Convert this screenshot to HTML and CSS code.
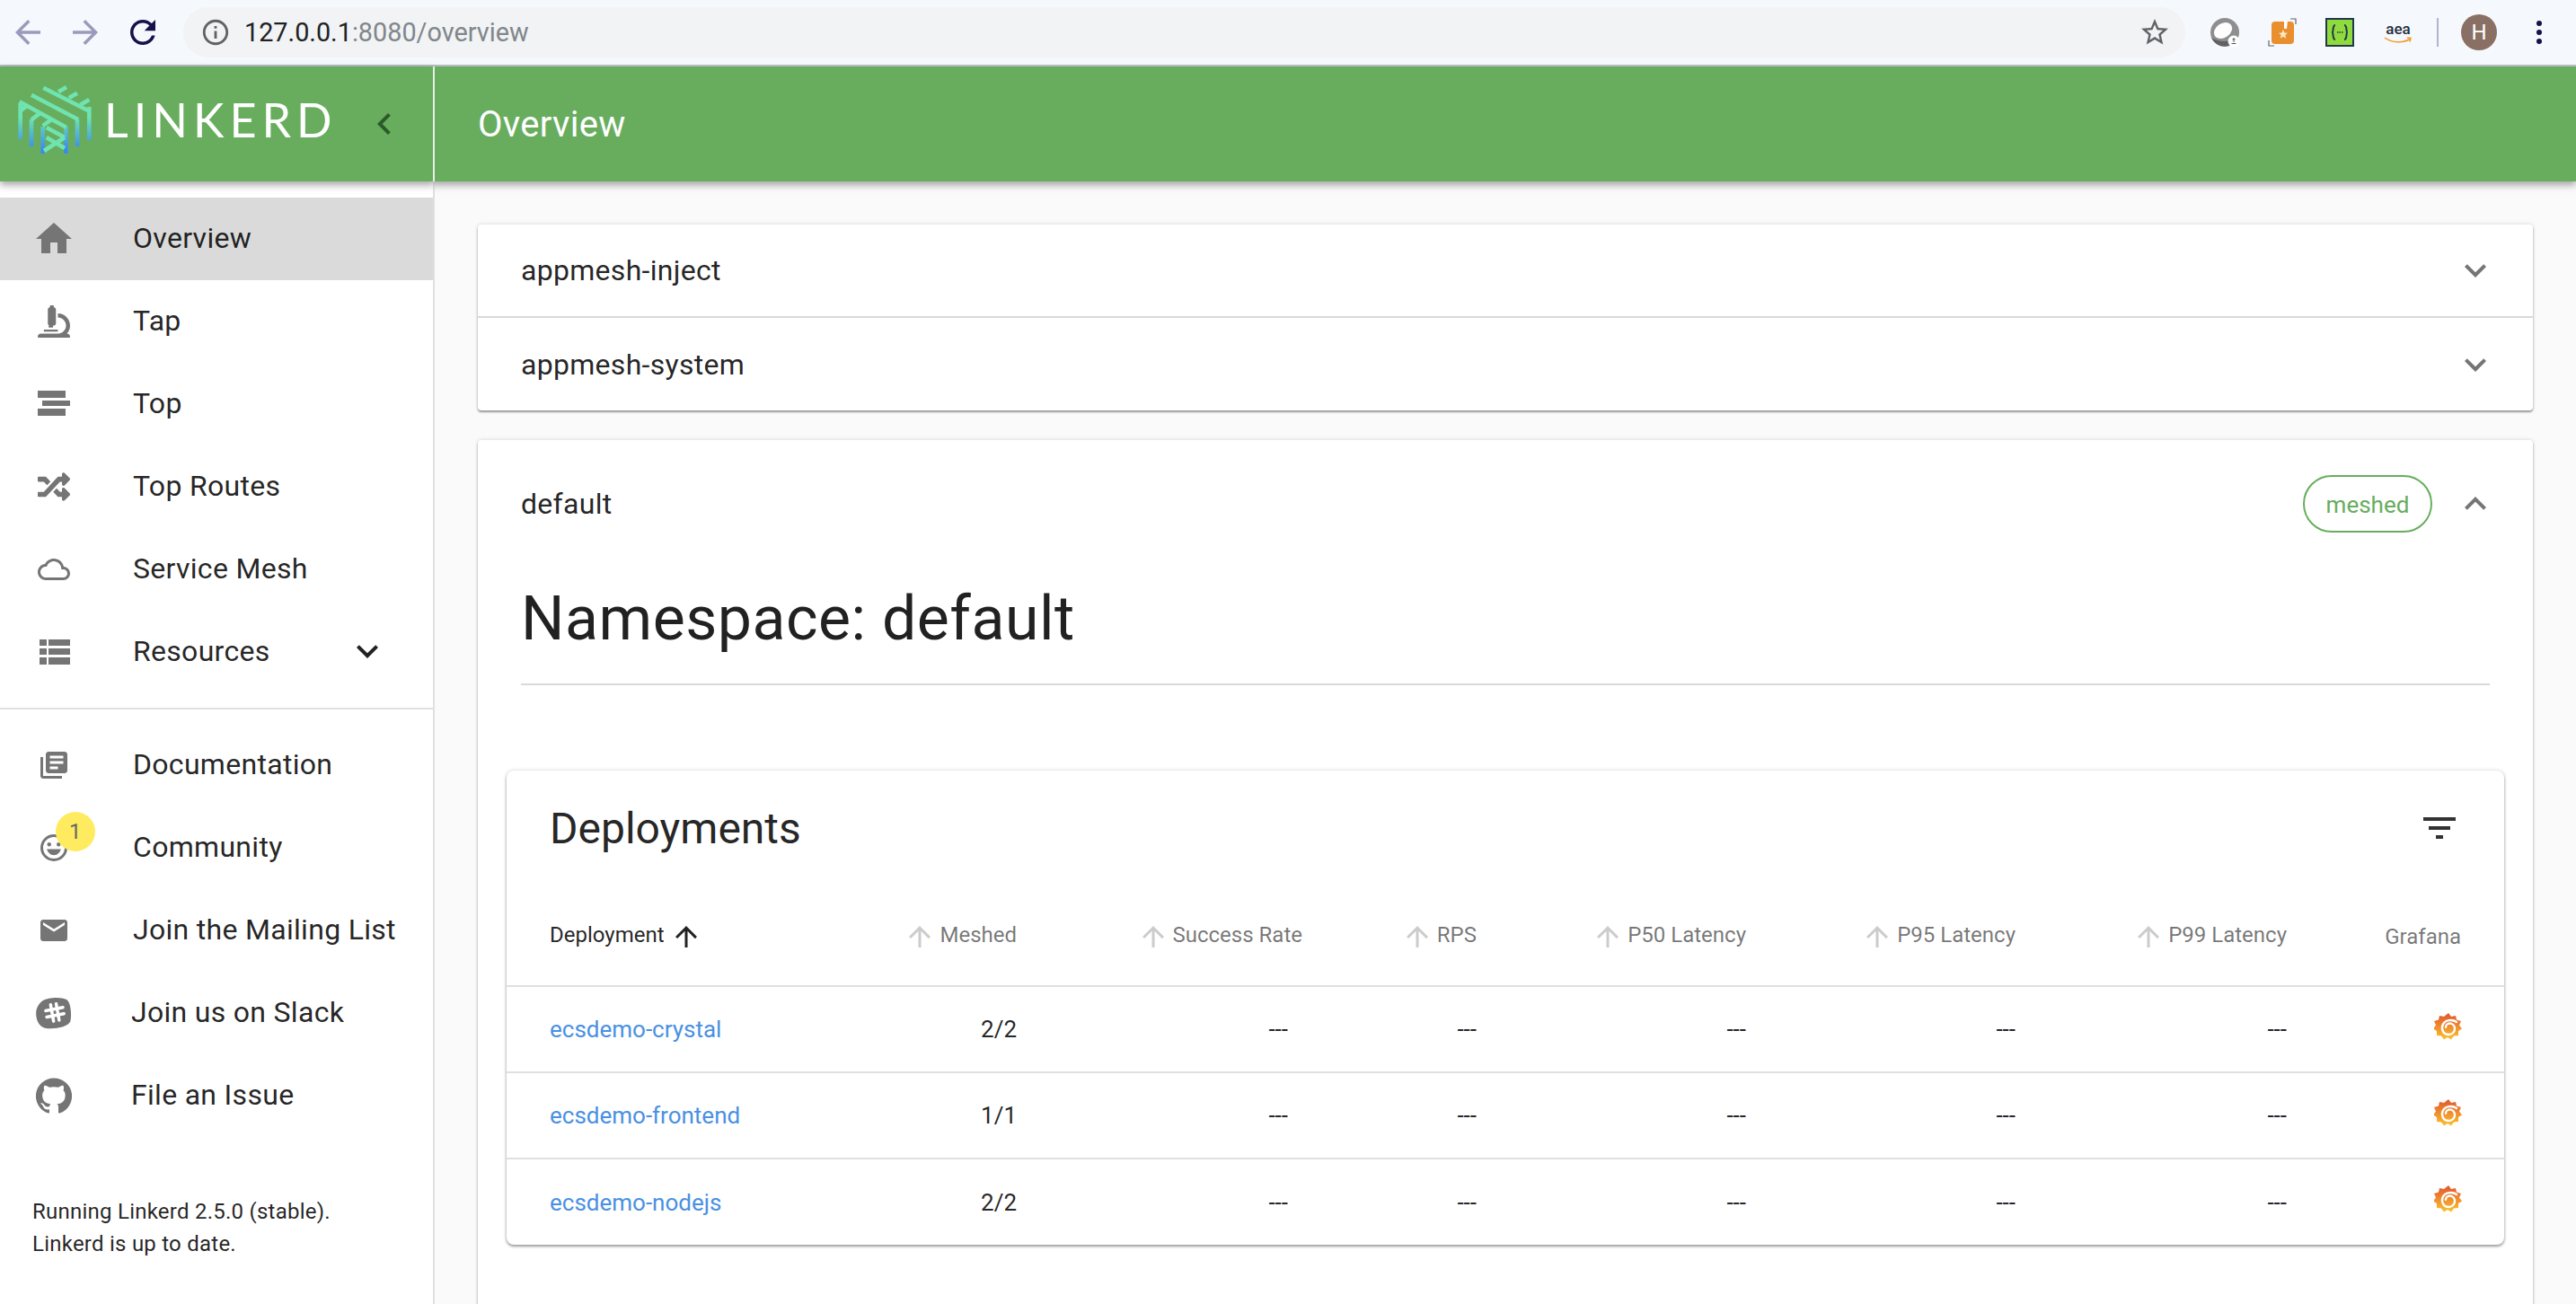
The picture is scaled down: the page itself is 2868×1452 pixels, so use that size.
FILE: index.html
```html
<!DOCTYPE html>
<html lang="en">
<head>
<title>Linkerd</title>
<link rel="stylesheet" href="styles.css">
</head>
<body>
<svg class="sprite">
	<defs>
		<linearGradient id="logograd" gradientUnits="userSpaceOnUse" x1="0" y1="36" x2="0" y2="72">
			<stop offset="0" stop-color="#6ce4b0"/>
			<stop offset="1" stop-color="#3b88f5"/>
		</linearGradient>
		<linearGradient id="sungrad" gradientUnits="userSpaceOnUse" x1="0" y1="2" x2="0" y2="30">
			<stop offset="0" stop-color="#e2592f"/>
			<stop offset="1" stop-color="#fbc02d"/>
		</linearGradient>
	</defs>
	<symbol id="more" viewBox="0 0 24 24"><path d="M16.59 8.59L12 13.17 7.41 8.59 6 10l6 6 6-6z"/></symbol>
	<symbol id="less" viewBox="0 0 24 24"><path d="M12 8l-6 6 1.41 1.41L12 10.83l4.59 4.58L18 14z"/></symbol>
	<symbol id="up" viewBox="0 0 24 24"><path d="M4 12l1.41 1.41L11 7.83V20h2V7.83l5.58 5.59L20 12l-8-8-8 8z"/></symbol>
	<symbol id="sun" viewBox="0 0 32 32">
		<path d="M16 1l3 4 5-1 1 4.500 5 1.500-2 4.500 3 4-4 2.500v5l-5 .5-3 4-4-2.500-4 2.500-3-4-5-.5v-5l-4-2.500 3-4-2-4.500 5-1.500 1-4.500 5 1z" fill="url(#sungrad)"/>
		<path d="M25 11C20.500 7.500 12 8.500 9.500 14.500 7.500 20 11 25 16 25c4.500 0 7.500-3.500 7-7.500-.5-3-3-5-5.500-5-2.500 0-4.500 2-4.500 4.300" fill="none" stroke="#fff" stroke-width="2.400" stroke-linecap="round"/>
	</symbol>
</svg>

<div class="chrome">
	<svg class="navicon faded" viewBox="0 0 24 24"><path d="M20 11H7.830l5.590-5.590L12 4l-8 8 8 8 1.410-1.410L7.830 13H20v-2z"/></svg>
	<svg class="navicon faded" viewBox="0 0 24 24"><path d="M12 4l-1.410 1.410L16.170 11H4v2h12.170l-5.580 5.590L12 20l8-8z"/></svg>
	<svg class="navicon dark" viewBox="0 0 24 24"><path d="M17.650 6.350C16.200 4.900 14.210 4 12 4c-4.420 0-7.990 3.580-7.990 8s3.570 8 7.990 8c3.730 0 6.840-2.550 7.730-6h-2.080c-.82 2.330-3.040 4-5.650 4-3.310 0-6-2.690-6-6s2.690-6 6-6c1.660 0 3.140.69 4.220 1.780L13 11h7V4l-2.350 2.350z"/></svg>
	<div class="omnibox">
		<svg class="info" viewBox="0 0 24 24"><path d="M11 7h2v2h-2zm0 4h2v6h-2zm1-9C6.480 2 2 6.480 2 12s4.480 10 10 10 10-4.480 10-10S17.520 2 12 2zm0 18c-4.410 0-8-3.590-8-8s3.590-8 8-8 8 3.590 8 8-3.590 8-8 8z"/></svg>
		<span class="url">127.0.0.1<span class="urlrest">:8080/overview</span></span>
		<svg class="star" viewBox="0 0 24 24"><path d="M22 9.240l-7.190-.62L12 2 9.190 8.630 2 9.240l5.460 4.730L5.820 21 12 17.270 18.180 21l-1.630-7.030L22 9.240zM12 15.400l-3.760 2.270 1-4.280-3.320-2.880 4.380-.38L12 6.100l1.710 4.040 4.380.38-3.320 2.880 1 4.280L12 15.400z"/></svg>
	</div>
	<div class="exts">
		<svg class="ext" viewBox="0 0 32 32">
			<circle cx="16" cy="16" r="16" fill="#8f8f8f"/>
			<path d="M1 22a16 16 0 0 0 30-2c-6 7-20 8-30 2z" fill="#616161"/>
			<ellipse cx="14" cy="14" rx="11" ry="8" fill="#fff" transform="rotate(-35 14 14)"/>
			<circle cx="26" cy="26" r="6.500" fill="#fff"/>
			<path d="M26 22l-2 2.500h4zM25.500 24h1v3h-1zM23.500 28h5v1h-5z" fill="#555"/>
		</svg>
		<svg class="ext" viewBox="0 0 32 32">
			<path d="M1 25v6h6M25 1h6v6" fill="none" stroke="#666" stroke-width="1.200"/>
			<rect x="4" y="4" width="25" height="25" rx="4" fill="#e98f2e"/>
			<path d="M18 3h4l-1 9h-3z" fill="#fff"/>
			<path d="M17 13l1.500 3.500 3.500.3-2.700 2.300.9 3.600-3.200-2-3.200 2 .9-3.600-2.700-2.300 3.500-.3z" fill="#fbe9c6"/>
		</svg>
		<svg class="ext" viewBox="0 0 32 32">
			<rect x="1" y="1" width="30" height="30" fill="#8fdb3e" stroke="#22384a" stroke-width="2"/>
			<path d="M11 8c-3 0-2 5-3 8 1 3 0 8 3 8M21 8c3 0 2 5 3 8-1 3 0 8-3 8" fill="none" stroke="#22384a" stroke-width="2"/>
			<path d="M13 16h1.500M15.500 16h1.500M18 16h1.500" stroke="#22384a" stroke-width="1.500"/>
		</svg>
		<div class="aea"><span class="aeatext">aea</span><svg class="aeasmile" viewBox="0 0 32 8"><path d="M1 1c8 6 21 6 28 1.500M26 1l4 .5-1 4" fill="none" stroke="#f39a26" stroke-width="1.500"/></svg></div>
		<div class="extsep"></div>
		<div class="avatar">H</div>
		<div class="dots"><i></i><i></i><i></i></div>
	</div>
</div>

<div class="app">
	<div class="sidebar">
		<div class="brand">
			<svg class="logo" viewBox="0 0 82 77">
				<g fill="none" stroke="url(#logograd)" stroke-width="4.600">
					<path d="M79.300 24v37M66 38v30M53.300 46v30M2.700 20v40M15 38v30M27.700 46v30"/>
				</g>
				<g fill="none" stroke="#6fe3b0" stroke-width="4.600">
					<path d="M28.300 2.700l52 26.600M15 10.700l52 27.300M1.700 18.300l52 28.400"/>
					<path d="M45 7.300L54 2M56.700 14L66 8.700M69.300 21.700L79.300 16"/>
					<path d="M2.700 28.300l9-6.600M15 38.300l10-7.600M27.700 45l10.600-7.700"/>
					<path d="M31.700 47l20.300 11M31.700 58l20.300 12M29 73l23-15"/>
				</g>
			</svg>
			<span class="wordmark">LINKERD</span>
			<svg class="collapse" viewBox="0 0 24 24"><path d="M15.410 7.410L14 6l-6 6 6 6 1.410-1.410L10.830 12z"/></svg>
		</div>
		<ul class="nav">
			<li class="navitem current"><span class="navico"><svg viewBox="0 0 24 24"><path d="M10 20v-6h4v6h5v-8h3L12 3 2 12h3v8z"/></svg></span>Overview</li>
			<li class="navitem"><span class="navico"><svg class="fa" viewBox="0 0 512 512"><path d="M160 320h12v16c0 8.840 7.160 16 16 16h40c8.840 0 16-7.160 16-16v-16h12c17.670 0 32-14.330 32-32V64c0-17.670-14.330-32-32-32V16c0-8.840-7.160-16-16-16h-32c-8.840 0-16 7.160-16 16v16c-17.670 0-32 14.330-32 32v224c0 17.670 14.330 32 32 32zm304 128h-1.290C493.240 413.990 512 369.200 512 320c0-105.880-86.120-192-192-192v64c70.580 0 128 57.420 128 128s-57.420 128-128 128H48c-26.510 0-48 21.490-48 48 0 8.840 7.160 16 16 16h480c8.840 0 16-7.160 16-16 0-26.510-21.490-48-48-48zm-360-32h208c4.420 0 8-3.580 8-8v-16c0-4.420-3.580-8-8-8H104c-4.420 0-8 3.580-8 8v16c0 4.420 3.580 8 8 8z"/></svg></span>Tap</li>
			<li class="navitem"><span class="navico"><svg class="fa" viewBox="0 0 36 36"><path d="M0 3h31v8H0zM5 14h31v6H5zM0 23h31v8H0z"/></svg></span>Top</li>
			<li class="navitem"><span class="navico"><svg class="fa" viewBox="0 0 512 512"><path d="M504.971 359.029c9.373 9.373 9.373 24.569 0 33.941l-80 79.984c-15.010 15.010-40.971 4.490-40.971-16.971V416h-58.785a12.004 12.004 0 0 1-8.773-3.812l-70.556-75.596 53.333-57.143L352 336h32v-39.981c0-21.438 25.943-31.998 40.971-16.971l80 79.981zM12 176h84l52.781 56.551 53.333-57.143-70.556-75.596A11.999 11.999 0 0 0 122.785 96H12c-6.627 0-12 5.373-12 12v56c0 6.627 5.373 12 12 12zm372 0v39.984c0 21.460 25.961 31.980 40.971 16.971l80-79.984c9.373-9.373 9.373-24.569 0-33.941l-80-79.981C409.943 24.021 384 34.582 384 56.019V96h-58.785a12.004 12.004 0 0 0-8.773 3.812L96 336H12c-6.627 0-12 5.373-12 12v56c0 6.627 5.373 12 12 12h110.785c3.326 0 6.503-1.381 8.773-3.812L352 176h32z"/></svg></span>Top Routes</li>
			<li class="navitem"><span class="navico"><svg class="fa" viewBox="0 0 24 24"><path d="M19.350 10.040C18.670 6.590 15.640 4 12 4 9.110 4 6.600 5.640 5.350 8.040 2.340 8.360 0 10.910 0 14c0 3.310 2.690 6 6 6h13c2.760 0 5-2.240 5-5 0-2.640-2.050-4.780-4.650-4.960zM19 18H6c-2.210 0-4-1.790-4-4s1.790-4 4-4h.71C7.370 7.690 9.480 6 12 6c3.040 0 5.500 2.460 5.500 5.500v.5H19c1.660 0 3 1.340 3 3s-1.340 3-3 3z"/></svg></span>Service Mesh</li>
			<li class="navitem"><span class="navico"><svg class="fa" viewBox="0 0 36 36"><path d="M2 4h8v7H2zM12 4h24v7H12zM2 14h8v7H2zM12 14h24v7H12zM2 24h8v8H2zM12 24h24v8H12z"/></svg></span>Resources<svg class="navchev"><use href="#more"/></svg></li>
		</ul>
		<ul class="nav extra">
			<li class="navitem"><span class="navico"><svg viewBox="0 0 24 24"><path d="M4 6H2v14c0 1.100.9 2 2 2h14v-2H4V6zm16-4H8c-1.100 0-2 .9-2 2v12c0 1.100.9 2 2 2h12c1.100 0 2-.9 2-2V4c0-1.100-.9-2-2-2zm-1 9H9V9h10v2zm-4 4H9v-2h6v2zm4-8H9V5h10v2z"/></svg></span>Documentation</li>
			<li class="navitem"><span class="navico"><svg viewBox="0 0 24 24"><path d="M12 2a10 10 0 1 0 0 20 10 10 0 0 0 0-20zm0 18a8 8 0 1 1 0-16 8 8 0 0 1 0 16zM8.500 11a1.500 1.500 0 1 0 0-3 1.500 1.500 0 0 0 0 3zm7 0a1.500 1.500 0 1 0 0-3 1.500 1.500 0 0 0 0 3zM6.800 13c.7 2.600 2.700 4.500 5.200 4.500s4.500-1.900 5.200-4.500z"/></svg><span class="badge">1</span></span>Community</li>
			<li class="navitem"><span class="navico"><svg viewBox="0 0 24 24"><path d="M20 4H4c-1.100 0-1.990.9-1.990 2L2 18c0 1.100.9 2 2 2h16c1.100 0 2-.9 2-2V6c0-1.100-.9-2-2-2zm0 4l-8 5-8-5V6l8 5 8-5v2z"/></svg></span>Join the Mailing List</li>
			<li class="navitem wide"><span class="navico"><svg viewBox="0 0 24 24"><path d="M5 3.500C8 1.500 17 1 20.500 3 23.500 5 24 14 23 17.500 21.500 21.500 12 23 6 22 2 21 .2 17 .1 12.500.1 8.500 2 5.500 5 3.500z"/><path d="M9.800 6.500l2 11M13.500 5.800l2 11M6.500 10.500l11.500-2.200M7.200 14.700l11.500-2.200" stroke="#fff" stroke-width="2.100" stroke-linecap="round"/></svg></span>Join us on Slack</li>
			<li class="navitem wide"><span class="navico"><svg viewBox="0 0 24 24"><path d="M12 .3a12 12 0 0 0-3.800 23.400c.6.1.8-.3.8-.6v-2c-3.300.7-4-1.600-4-1.600-.6-1.400-1.400-1.800-1.400-1.800-1-.7.1-.7.1-.7 1.200 0 1.900 1.200 1.900 1.200 1 1.800 2.800 1.300 3.500 1 0-.8.4-1.300.7-1.600-2.700-.3-5.500-1.300-5.500-6 0-1.200.5-2.300 1.300-3.100-.2-.4-.6-1.600 0-3.200 0 0 1-.3 3.400 1.200a11.500 11.500 0 0 1 6 0c2.300-1.500 3.300-1.200 3.300-1.200.6 1.600.2 2.800 0 3.200.9.8 1.300 1.900 1.300 3.200 0 4.600-2.800 5.600-5.500 5.900.5.4.9 1 .9 2.200v3.300c0 .3.1.7.8.6A12 12 0 0 0 12 .3"/></svg></span>File an Issue</li>
		</ul>
		<p class="version">Running Linkerd 2.5.0 (stable).<br>Linkerd is up to date.</p>
	</div>

	<div class="main">
		<div class="topbar">Overview</div>
		<div class="content">
			<div class="panel">
				<div class="summary"><span>appmesh-inject</span><svg class="chev"><use href="#more"/></svg></div>
				<div class="summary second"><span>appmesh-system</span><svg class="chev"><use href="#more"/></svg></div>
			</div>
			<div class="panel open">
				<div class="summary tall"><span class="nsname">default</span><span class="chip">meshed</span><svg class="chev"><use href="#less"/></svg></div>
				<div class="detail">
					<h1 class="nstitle">Namespace: default</h1>
					<div class="rule"></div>
					<div class="card">
						<div class="cardhead"><span class="cardtitle">Deployments</span><svg class="filter" viewBox="0 0 24 24"><path d="M10 18h4v-2h-4v2zM3 6v2h18V6H3zm3 7h12v-2H6v2z"/></svg></div>
						<table class="grid">
							<colgroup><col class="c1"><col class="c2"><col class="c3"><col class="c4"><col class="c5"><col class="c6"><col class="c7"><col class="c8"></colgroup>
							<thead>
								<tr>
									<th class="namecol active">Deployment<svg class="sort after"><use href="#up"/></svg></th>
									<th class="num"><svg class="sort"><use href="#up"/></svg>Meshed</th>
									<th class="num"><svg class="sort"><use href="#up"/></svg>Success Rate</th>
									<th class="num"><svg class="sort"><use href="#up"/></svg>RPS</th>
									<th class="num"><svg class="sort"><use href="#up"/></svg>P50 Latency</th>
									<th class="num"><svg class="sort"><use href="#up"/></svg>P95 Latency</th>
									<th class="num"><svg class="sort"><use href="#up"/></svg>P99 Latency</th>
									<th class="num last">Grafana</th>
								</tr>
							</thead>
							<tbody>
								<tr>
									<td class="namecol"><a class="link">ecsdemo-crystal</a></td><td class="num">2/2</td><td class="num inset">---</td><td class="num">---</td><td class="num">---</td><td class="num">---</td><td class="num">---</td>
									<td class="num last"><svg class="sun"><use href="#sun"/></svg></td>
								</tr>
								<tr>
									<td class="namecol"><a class="link">ecsdemo-frontend</a></td><td class="num">1/1</td><td class="num inset">---</td><td class="num">---</td><td class="num">---</td><td class="num">---</td><td class="num">---</td>
									<td class="num last"><svg class="sun"><use href="#sun"/></svg></td>
								</tr>
								<tr>
									<td class="namecol"><a class="link">ecsdemo-nodejs</a></td><td class="num">2/2</td><td class="num inset">---</td><td class="num">---</td><td class="num">---</td><td class="num">---</td><td class="num">---</td>
									<td class="num last"><svg class="sun"><use href="#sun"/></svg></td>
								</tr>
							</tbody>
						</table>
					</div>
				</div>
			</div>
		</div>
	</div>
</div>
</body>
</html>
```

FILE: styles.css
```css
* {
	margin: 0;
	padding: 0;
	box-sizing: border-box;
	}
html,body{
	height:100%;
	overflow:hidden;
	}
body{
	font-family:Roboto,"Liberation Sans",sans-serif;
	color:rgba(0,0,0,0.87);
	background-color:#fafafa;
	}
ul{
	list-style:none;
	}
.sprite{
	position:absolute;
	width:0;
	height:0;
	}

/* browser bar */
.chrome{
	display:flex;
	align-items:center;
	height:74px;
	padding-left:10px;
	background-color:#f5f8fd;
	border-bottom:2px solid #b8bcc0;
	}
.navicon{
	width:42px;
	height:42px;
	margin-right:22px;
	flex:none;
	}
.faded{
	fill:#9a9abb;
	}
.dark{
	fill:#14124a;
	}
.omnibox{
	display:flex;
	align-items:center;
	width:2229px;
	height:56px;
	margin-left:2px;
	padding:0 16px 0 19px;
	border-radius:28px;
	background-color:#f1f3f4;
	}
.info{
	width:34px;
	height:34px;
	margin-right:15px;
	fill:#5f6368;
	}
.url{
	flex:1;
	font-size:28.8px;
	color:#202124;
	}
.urlrest{
	color:#80868b;
	}
.star{
	width:36px;
	height:36px;
	fill:#5f6368;
	}
.exts{
	display:flex;
	align-items:center;
	flex:1;
	padding-left:28px;
	}
.ext{
	width:32px;
	height:32px;
	margin-right:32px;
	flex:none;
	}
.aea{
	display:flex;
	flex-direction:column;
	align-items:center;
	width:34px;
	margin-right:26px;
	}
.aeatext{
	font-size:17px;
	line-height:17px;
	font-weight:500;
	color:#232f3e;
	}
.aeasmile{
	width:32px;
	height:8px;
	}
.extsep{
	width:2px;
	height:32px;
	margin-right:25px;
	background-color:#b4b4cc;
	}
.avatar{
	width:40px;
	height:40px;
	border-radius:50%;
	background-color:#8a6f64;
	color:#fff;
	font-size:24px;
	line-height:40px;
	text-align:center;
	}
.dots{
	display:flex;
	flex-direction:column;
	gap:4px;
	margin-left:44px;
	}
.dots i{
	display:block;
	width:6px;
	height:6px;
	border-radius:50%;
	background-color:#14124a;
	}

/* page */
.app{
	display:flex;
	height:1378px;
	}
.sidebar{
	width:484px;
	flex:none;
	background-color:#fff;
	border-right:2px solid #e0e0e0;
	}
.brand{
	display:flex;
	align-items:center;
	position:relative;
	height:128px;
	margin-right:-2px;
	padding-left:20px;
	background-color:#68ad5e;
	border-right:2px solid #e6efe4;
	box-shadow:0 4px 8px rgba(0,0,0,0.35);
	}
.logo{
	width:82px;
	height:77px;
	margin-bottom:9px;
	flex:none;
	}
.wordmark{
	margin-left:14px;
	padding-bottom:10px;
	font-family:Lato,sans-serif;
	font-size:52px;
	letter-spacing:6px;
	color:#fff;
	}
.collapse{
	position:absolute;
	left:404px;
	top:40px;
	width:48px;
	height:48px;
	fill:#2c5a28;
	}
.nav{
	padding-top:18px;
	padding-bottom:16px;
	}
.navitem{
	display:flex;
	align-items:center;
	height:92px;
	padding-bottom:3px;
	font-size:32px;
	letter-spacing:0.3px;
	}
.current{
	background-color:#dadada;
	}
.navico{
	position:relative;
	display:flex;
	justify-content:center;
	align-items:center;
	width:148px;
	margin-top:3px;
	padding-right:28px;
	flex:none;
	}
.wide .navico{
	width:146px;
	padding-right:26px;
	}
.navico svg{
	width:48px;
	height:48px;
	fill:#757575;
	}
.navico svg.fa,
.extra .navico svg{
	width:36px;
	height:36px;
	}
.extra .wide .navico svg{
	width:40px;
	height:40px;
	}
.navchev{
	width:48px;
	height:48px;
	margin-left:auto;
	margin-right:49px;
	fill:#222;
	}
.extra{
	border-top:2px solid #e0e0e0;
	padding-top:16px;
	padding-bottom:0;
	}
.badge{
	position:absolute;
	left:62px;
	top:-22px;
	width:44px;
	height:44px;
	border-radius:50%;
	background-color:#ffeb5f;
	color:#666;
	font-size:24px;
	line-height:44px;
	text-align:center;
	}
.version{
	margin-top:65px;
	padding-left:36px;
	font-size:24px;
	line-height:36px;
	letter-spacing:0.24px;
	}

.main{
	flex:1;
	min-width:0;
	overflow:hidden;
	}
.topbar{
	position:relative;
	height:128px;
	padding-left:48px;
	font-size:40px;
	line-height:130px;
	letter-spacing:0.3px;
	color:#fff;
	background-color:#68ad5e;
	box-shadow:0 4px 8px rgba(0,0,0,0.35);
	}
.content{
	height:1250px;
	padding:48px 48px 0;
	overflow:hidden;
	}
.panel{
	background-color:#fff;
	border-radius:4px;
	box-shadow:0 2px 2px rgba(0,0,0,0.35),0 0 4px rgba(0,0,0,0.16);
	margin-bottom:33px;
	}
.summary{
	display:flex;
	align-items:center;
	height:102px;
	padding:0 40px 0 48px;
	font-size:32px;
	letter-spacing:0.3px;
	}
.summary span:first-child{
	flex:1;
	}
.second{
	height:105px;
	border-top:2px solid #d9d9d9;
	}
.tall{
	height:142px;
	}
.chev{
	width:48px;
	height:48px;
	fill:#757575;
	}
.chip{
	width:144px;
	height:64px;
	margin-right:24px;
	border:2px solid #68ad5e;
	border-radius:32px;
	color:#68ad5e;
	font-size:26px;
	line-height:62px;
	letter-spacing:0;
	text-align:center;
	}
.detail{
	padding:0 48px 200px;
	}
.nstitle{
	font-size:68px;
	font-weight:400;
	line-height:80px;
	letter-spacing:0.5px;
	margin-top:17px;
	}
.rule{
	height:2px;
	margin-top:32px;
	background-color:#d9d9d9;
	}
.card{
	margin:95px -16px 0;
	background-color:#fff;
	border-radius:8px;
	box-shadow:0 2px 3px rgba(0,0,0,0.35),0 0 4px rgba(0,0,0,0.16);
	}
.cardhead{
	display:flex;
	align-items:center;
	justify-content:space-between;
	height:128px;
	padding:0 48px;
	}
.cardtitle{
	font-size:48px;
	}
.filter{
	width:48px;
	height:48px;
	fill:#333;
	}
.grid{
	width:100%;
	table-layout:fixed;
	border-collapse:collapse;
	}
.c1{width:380px;}
.c2{width:188px;}
.c3{width:318px;}
.c4{width:194px;}
.c5{width:300px;}
.c6{width:300px;}
.c7{width:302px;}
.c8{width:242px;}
th{
	height:112px;
	padding-top:3px;
	font-size:24px;
	font-weight:400;
	color:rgba(0,0,0,0.54);
	border-bottom:2px solid #e0e0e0;
	white-space:nowrap;
	}
td{
	height:96px;
	font-size:26px;
	border-bottom:2px solid #e0e0e0;
	}
tr:last-child td{
	border-bottom:0;
	}
.namecol{
	padding-left:48px;
	text-align:left;
	}
.active{
	color:rgba(0,0,0,0.87);
	}
.num{
	text-align:right;
	}
.inset{
	padding-right:16px;
	}
.last{
	padding-right:48px;
	}
.sort{
	width:36px;
	height:36px;
	margin-right:4px;
	vertical-align:middle;
	fill:#ccc;
	}
.after{
	margin:0 0 0 6px;
	fill:#222;
	}
.link{
	color:#4a90e2;
	}
.sun{
	width:32px;
	height:32px;
	vertical-align:middle;
	position:relative;
	top:-4px;
	left:2px;
	}
```
